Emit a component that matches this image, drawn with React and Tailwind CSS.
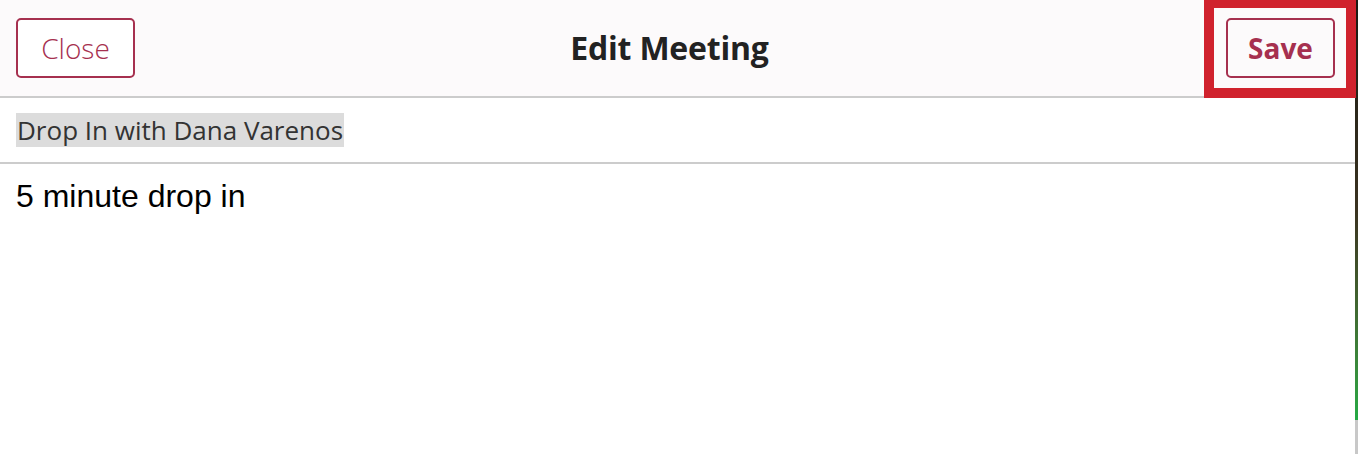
import React from "react";

const EditMeeting = () => {
  return (
    <div className="flex w-[1358px] h-[454px] bg-white overflow-hidden">
      <div className="relative flex-1 flex flex-col">
        <div className="flex items-center justify-between h-[98px] px-4 bg-[#fcfafb] border-b-2 border-[#cccccc]" style={{ fontFamily: "'Open Sans', Lato, sans-serif" }}>
          <button className="h-[60px] w-[119px] rounded-[5px] border-2 border-[#a6304f] text-[#a6304f] text-[28px] font-light bg-white">
            Close
          </button>
          <h1 className="text-[32px] font-bold text-[#222222] -ml-[22px] tracking-[-0.2px]">Edit Meeting</h1>
          <button className="h-[60px] w-[109px] mr-[4px] rounded-[5px] border-2 border-[#a6304f] text-[#a6304f] text-[28px] font-bold bg-[#fcfafb]">
            Save
          </button>
        </div>
        <div className="h-[66px] px-4 flex items-center border-b-2 border-[#cccccc]">
          <span className="bg-[#dcdcdc] text-[#333333] text-[26px] leading-[34px] px-[1px]" style={{ fontFamily: "'Open Sans', Lato, sans-serif" }}>
            Drop In with Dana Varenos
          </span>
        </div>
        <div className="px-4 pt-[14px] text-[32px] leading-[36px] text-black" style={{ fontFamily: "'Liberation Sans', Arial, sans-serif" }}>
          5 minute drop in
        </div>
        <div className="absolute left-[1204px] top-0 w-[152px] h-[98px] border-[10px] border-t-[8px] border-[#d0222d] pointer-events-none" />
      </div>
      <div className="w-[3px] h-full flex flex-col">
        <div className="h-[420px] bg-gradient-to-b from-[#1a1a14] via-[#3a3220] to-[#22aa44]" />
        <div className="flex-1 bg-[#c8c8c8]" />
      </div>
    </div>
  );
};

export default EditMeeting;
